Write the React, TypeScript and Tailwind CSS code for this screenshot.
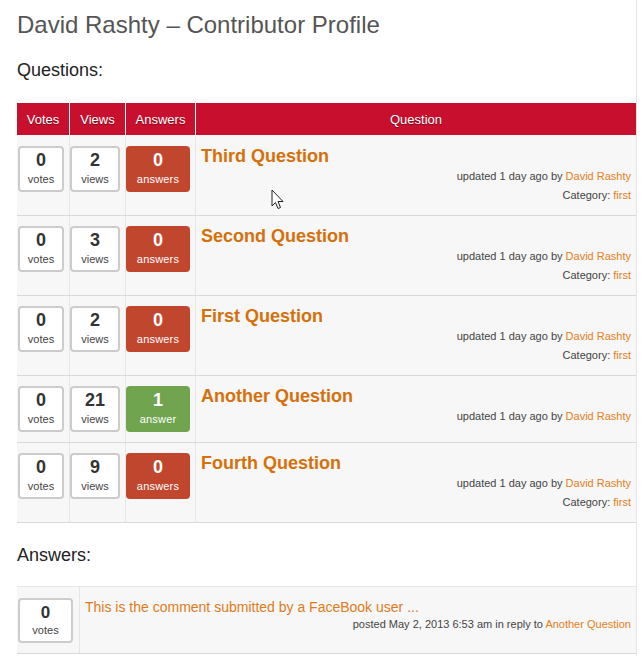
import React from "react";

type Q = { votes: number; views: number; answers: number; title: string; cat: boolean };

const rows: Q[] = [
  { votes: 0, views: 2, answers: 0, title: "Third Question", cat: true },
  { votes: 0, views: 3, answers: 0, title: "Second Question", cat: true },
  { votes: 0, views: 2, answers: 0, title: "First Question", cat: true },
  { votes: 0, views: 21, answers: 1, title: "Another Question", cat: false },
  { votes: 0, views: 9, answers: 0, title: "Fourth Question", cat: true },
];

function StatBox({ n, label, w }: { n: number; label: string; w: string }) {
  return (
    <div
      className={`${w} h-[46px] bg-white border-2 border-[#cccccc] rounded-[4px] flex flex-col items-center pt-[2px] text-[#333]`}
    >
      <div className="text-[18px] leading-[21px] font-bold">{n}</div>
      <div className="text-[11px] leading-[17px] text-[#444]">{label}</div>
    </div>
  );
}

function AnswerBox({ n }: { n: number }) {
  const green = n > 0;
  return (
    <div
      className={`w-[64px] h-[46px] rounded-[4px] flex flex-col items-center pt-[4px] text-white ${
        green ? "bg-[#70a44e]" : "bg-[#c1462e]"
      }`}
    >
      <div className="text-[18px] leading-[21px] font-bold">{n}</div>
      <div className="text-[11px] leading-[17px] tracking-[0.2px]">{green ? "answer" : "answers"}</div>
    </div>
  );
}

export default function App() {
  return (
    <div
      className="relative w-[637px] min-h-screen border-r border-[#e6e6e6] pl-[17px] bg-white"
      style={{ fontFamily: '"Liberation Sans", Arial, sans-serif' }}
    >
      <h1 className="pt-[11px] text-[24px] leading-[28px] text-[#555555] font-normal">
        David Rashty – Contributor Profile
      </h1>
      <h2 className="mt-[20px] text-[18px] leading-[22px] text-[#222222]">Questions:</h2>

      <div className="mt-[22px] w-[619px]">
        <div className="grid grid-cols-[53px_56px_70px_1fr] h-[33px] bg-[#c8102e] border-b border-[#f5f5f5] text-white text-[13px] [text-shadow:0_1px_1px_rgba(0,0,0,0.45)]">
          <div className="flex items-center justify-center border-r border-white pt-[1px]">Votes</div>
          <div className="flex items-center justify-center border-r border-white pt-[1px]">Views</div>
          <div className="flex items-center justify-center border-r border-white pt-[1px]">Answers</div>
          <div className="flex items-center justify-center pt-[1px]">Question</div>
        </div>
        {rows.map((r, i) => (
          <div
            key={i}
            className="grid grid-cols-[53px_56px_70px_1fr] bg-[#f7f7f7] border-b border-[#d9d9d9]"
          >
            <div className="border-r border-[#e6e6e6] pl-[1px] py-[10px]">
              <StatBox n={r.votes} label="votes" w="w-[46px]" />
            </div>
            <div className="border-r border-[#e6e6e6] py-[10px]">
              <StatBox n={r.views} label="views" w="w-[50px]" />
            </div>
            <div className="border-r border-[#e6e6e6] py-[10px]">
              <AnswerBox n={r.answers} />
            </div>
            <div className="py-[10px] pl-[5px] pr-[5px]">
              <div className="text-[18px] leading-[21px] font-bold text-[#d5700a]">{r.title}</div>
              <div className="text-right text-[11px] leading-[19px] text-[#444]">
                updated 1 day ago by <span className="text-[#e67e22]">David Rashty</span>
              </div>
              {r.cat && (
                <div className="text-right text-[11px] leading-[19px] text-[#444]">
                  Category: <span className="text-[#e67e22]">first</span>
                </div>
              )}
            </div>
          </div>
        ))}
      </div>

      <h2 className="mt-[21px] text-[18px] leading-[22px] text-[#222222]">Answers:</h2>

      <div className="mt-[20px] w-[619px] grid grid-cols-[63px_1fr] bg-[#f7f7f7] border-t border-b border-t-[#e8e8e8] border-b-[#d9d9d9]">
        <div className="border-r border-[#e6e6e6] pl-[1px] pt-[11px] pb-[10px]">
          <div className="w-[55px] h-[45px] bg-white border-2 border-[#cccccc] rounded-[4px] flex flex-col items-center pt-[2px] text-[#333]">
            <div className="text-[17px] leading-[21px] font-bold">0</div>
            <div className="text-[11px] leading-[15px] text-[#444]">votes</div>
          </div>
        </div>
        <div className="pt-[11px] pl-[5px] pr-[5px]">
          <div className="text-[14px] leading-[18px] text-[#e07b1a]">
            This is the comment submitted by a FaceBook user ...
          </div>
          <div className="text-right text-[11px] leading-[16px] text-[#444]">
            posted May 2, 2013 6:53 am in reply to{" "}
            <span className="text-[#e67e22]">Another Question</span>
          </div>
        </div>
      </div>

      <svg
        className="absolute left-[271px] top-[189px]"
        width="13"
        height="21"
        viewBox="0 0 13 21"
      >
        <path
          d="M1 1 L1 17 L4.5 13.5 L7 19.5 L9.5 18.5 L7 12.5 L12 12.5 Z"
          fill="white"
          stroke="#222"
          strokeWidth="1"
          strokeLinejoin="miter"
        />
      </svg>
    </div>
  );
}
